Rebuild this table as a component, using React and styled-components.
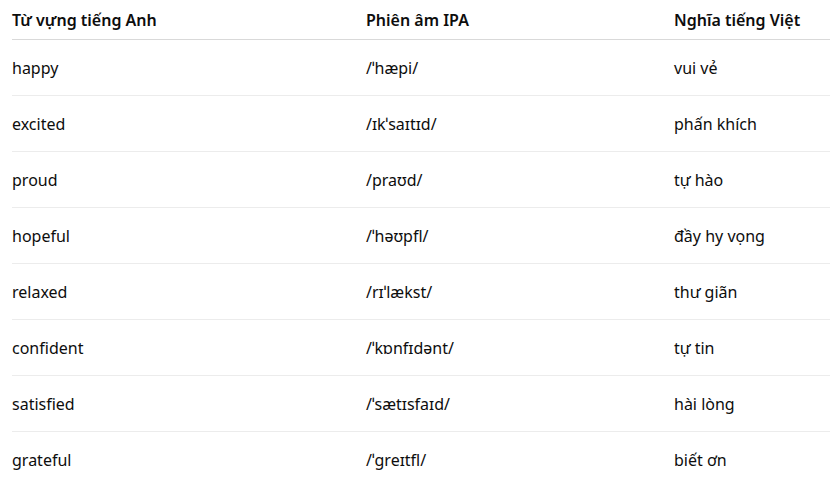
import React from "react";
import styled, { createGlobalStyle } from "styled-components";

const Global = createGlobalStyle`
  html, body { margin: 0; padding: 0; background: #fff; }
  body { font-family: "Noto Sans", "Open Sans", sans-serif; color: #0d0d0d; }
`;

const Table = styled.div`
  margin-left: 12px;
  width: 818px;
  display: grid;
  grid-template-columns: 354px 308px 1fr;
`;

const HeadCell = styled.div`
  height: 39px;
  display: flex;
  align-items: center;
  font-size: 16px;
  font-weight: 600;
  border-bottom: 1px solid #d9d9d9;
  white-space: nowrap;
`;

const Cell = styled.div`
  height: 55px;
  display: flex;
  align-items: center;
  font-size: 16px;
  font-weight: 400;
  border-bottom: 1px solid ${(p) => (p.$last ? "transparent" : "#ececec")};
  white-space: nowrap;
`;

const rows = [
  ["happy", "/ˈhæpi/", "vui vẻ"],
  ["excited", "/ɪkˈsaɪtɪd/", "phấn khích"],
  ["proud", "/praʊd/", "tự hào"],
  ["hopeful", "/ˈhəʊpfl/", "đầy hy vọng"],
  ["relaxed", "/rɪˈlækst/", "thư giãn"],
  ["confident", "/ˈkɒnfɪdənt/", "tự tin"],
  ["satisfied", "/ˈsætɪsfaɪd/", "hài lòng"],
  ["grateful", "/ˈɡreɪtfl/", "biết ơn"],
];

export default function App() {
  return (
    <>
      <Global />
      <Table>
        <HeadCell>Từ vựng tiếng Anh</HeadCell>
        <HeadCell>Phiên âm IPA</HeadCell>
        <HeadCell>Nghĩa tiếng Việt</HeadCell>
        {rows.map((r, i) =>
          r.map((c, j) => (
            <Cell key={`${i}-${j}`} $last={i === rows.length - 1}>
              {c}
            </Cell>
          ))
        )}
      </Table>
    </>
  );
}
